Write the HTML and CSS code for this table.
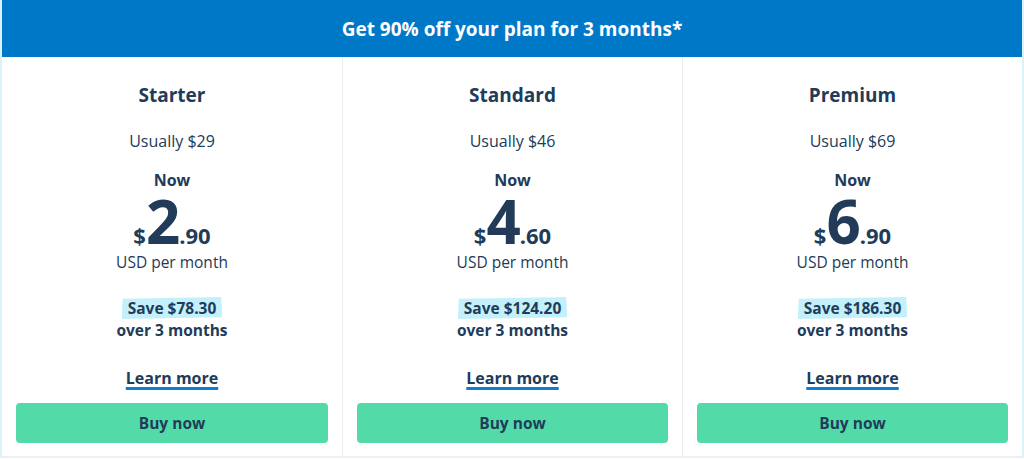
FILE: index.html
```html
<!DOCTYPE html>
<html lang="en">
<head>
<meta charset="utf-8">
<title>Plans</title>
<link rel="stylesheet" href="styles.css">
</head>
<body>
<div class="pricing">
  <div class="banner">Get 90% off your plan for 3 months*</div>
  <div class="plans">
    <div class="plan">
      <div class="name">Starter</div>
      <div class="usual">Usually $29</div>
      <div class="now">Now</div>
      <div class="price"><span class="cur">$</span><span class="big">2</span><span class="cents">.90</span></div>
      <div class="per">USD per month</div>
      <div class="save"><span class="hl">Save $78.30</span></div>
      <div class="over">over 3 months</div>
      <div class="learn"><a href="#">Learn more</a></div>
      <button class="buy">Buy now</button>
    </div>
    <div class="plan">
      <div class="name">Standard</div>
      <div class="usual">Usually $46</div>
      <div class="now">Now</div>
      <div class="price"><span class="cur">$</span><span class="big">4</span><span class="cents">.60</span></div>
      <div class="per">USD per month</div>
      <div class="save"><span class="hl">Save $124.20</span></div>
      <div class="over">over 3 months</div>
      <div class="learn"><a href="#">Learn more</a></div>
      <button class="buy">Buy now</button>
    </div>
    <div class="plan">
      <div class="name">Premium</div>
      <div class="usual">Usually $69</div>
      <div class="now">Now</div>
      <div class="price"><span class="cur">$</span><span class="big">6</span><span class="cents">.90</span></div>
      <div class="per">USD per month</div>
      <div class="save"><span class="hl">Save $186.30</span></div>
      <div class="over">over 3 months</div>
      <div class="learn"><a href="#">Learn more</a></div>
      <button class="buy">Buy now</button>
    </div>
  </div>
</div>
</body>
</html>
```
FILE: styles.css
```css
* { box-sizing: border-box; }
html, body { margin: 0; padding: 0; background: #ffffff; }
body {
  font-family: "Open Sans", "Liberation Sans", sans-serif;
  color: #213b58;
}
.pricing {
  width: 1024px;
  border-left: 2px solid #dcf2fb;
  border-right: 2px solid #dcf2fb;
  border-bottom: 2px solid #eef1f4;
}
.banner {
  height: 57px;
  background: #0078c8;
  color: #ffffff;
  font-weight: 700;
  font-size: 19px;
  display: flex;
  align-items: center;
  justify-content: center;
  padding-top: 1px;
}
.plans {
  display: grid;
  grid-template-columns: repeat(3, 1fr);
}
.plan {
  display: flex;
  flex-direction: column;
  align-items: center;
  padding: 26px 14px 13px 14px;
  text-align: center;
}
.plan + .plan { border-left: 1px solid #eaeef2; }
.name {
  font-weight: 700;
  font-size: 19px;
  line-height: 24px;
}
.usual {
  margin-top: 23px;
  font-size: 16px;
  line-height: 22px;
}
.now {
  margin-top: 17px;
  font-weight: 700;
  font-size: 16px;
  line-height: 22px;
}
.price {
  margin-top: 2px;
  font-weight: 700;
  line-height: 56px;
  height: 56px;
  white-space: nowrap;
}
.cur, .cents { font-size: 22px; }
.big { font-size: 60px; letter-spacing: -1px; }
.per {
  margin-top: 3px;
  font-size: 15.5px;
  line-height: 20px;
}
.save {
  margin-top: 25px;
  font-weight: 700;
  font-size: 15.5px;
  line-height: 22px;
}
.hl {
  display: inline-block;
  padding: 0 6px;
  background: #c3f0fb;
  clip-path: polygon(1% 8%, 99% 0, 100% 92%, 0 100%);
}
.over {
  font-weight: 700;
  font-size: 15.5px;
  line-height: 22px;
}
.learn {
  margin-top: 26px;
  line-height: 22px;
}
.learn a {
  color: #213b58;
  font-weight: 700;
  font-size: 16px;
  text-decoration: underline;
  text-decoration-color: #0a7fd3;
  text-decoration-thickness: 3px;
  text-underline-offset: 3px;
}
.buy {
  margin-top: 14px;
  width: 100%;
  height: 40px;
  border: none;
  border-radius: 4px;
  background: #52dba9;
  color: #213b58;
  font-family: inherit;
  font-weight: 700;
  font-size: 15.5px;
  cursor: pointer;
}
```
